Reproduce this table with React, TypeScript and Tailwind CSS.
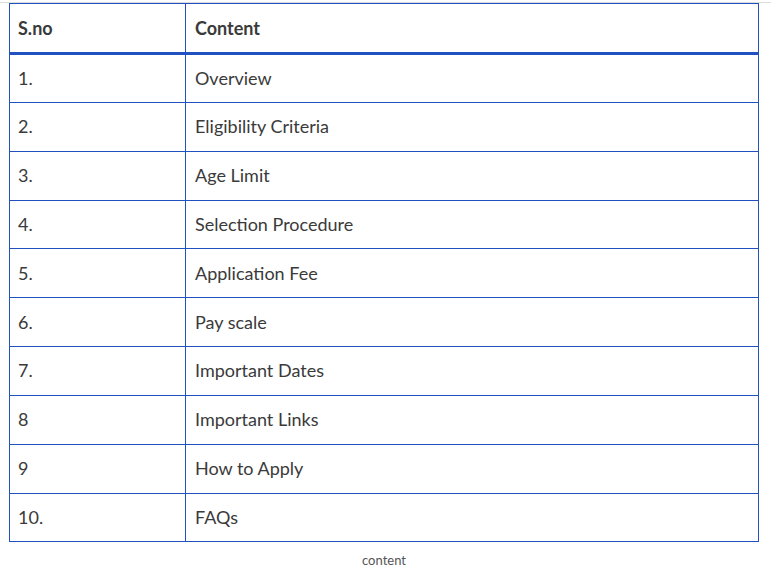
const rows: [string, string][] = [
  ["1.", "Overview"],
  ["2.", "Eligibility Criteria"],
  ["3.", "Age Limit"],
  ["4.", "Selection Procedure"],
  ["5.", "Application Fee"],
  ["6.", "Pay scale"],
  ["7.", "Important Dates"],
  ["8", "Important Links"],
  ["9", "How to Apply"],
  ["10.", "FAQs"],
];

export default function App() {
  return (
    <div className="min-h-[567px] bg-white pt-[2px] font-['Lato','Open_Sans',sans-serif] text-[#3a3a3a]">
      <div className="border-t border-[#dcdcdc]">
        <figure className="ml-[9px] w-[750px]">
          <table className="w-full border-collapse border border-[#2150c0] text-[18px]">
            <thead>
              <tr className="h-[50px] border-b-[3px] border-[#2150c0]">
                <th className="w-[176px] border-r border-[#2150c0] pl-[8px] text-left font-bold">S.no</th>
                <th className="pl-[9px] text-left font-bold">Content</th>
              </tr>
            </thead>
            <tbody>
              {rows.map(([n, label]) => (
                <tr key={label} className="h-[48.85px] border-b border-[#2150c0]">
                  <td className="border-r border-[#2150c0] pl-[8px]">{n}</td>
                  <td className="pl-[9px]">{label}</td>
                </tr>
              ))}
            </tbody>
          </table>
          <figcaption className="pt-[11px] text-center text-[13px] leading-[14px] text-[#555]">content</figcaption>
        </figure>
      </div>
    </div>
  );
}
